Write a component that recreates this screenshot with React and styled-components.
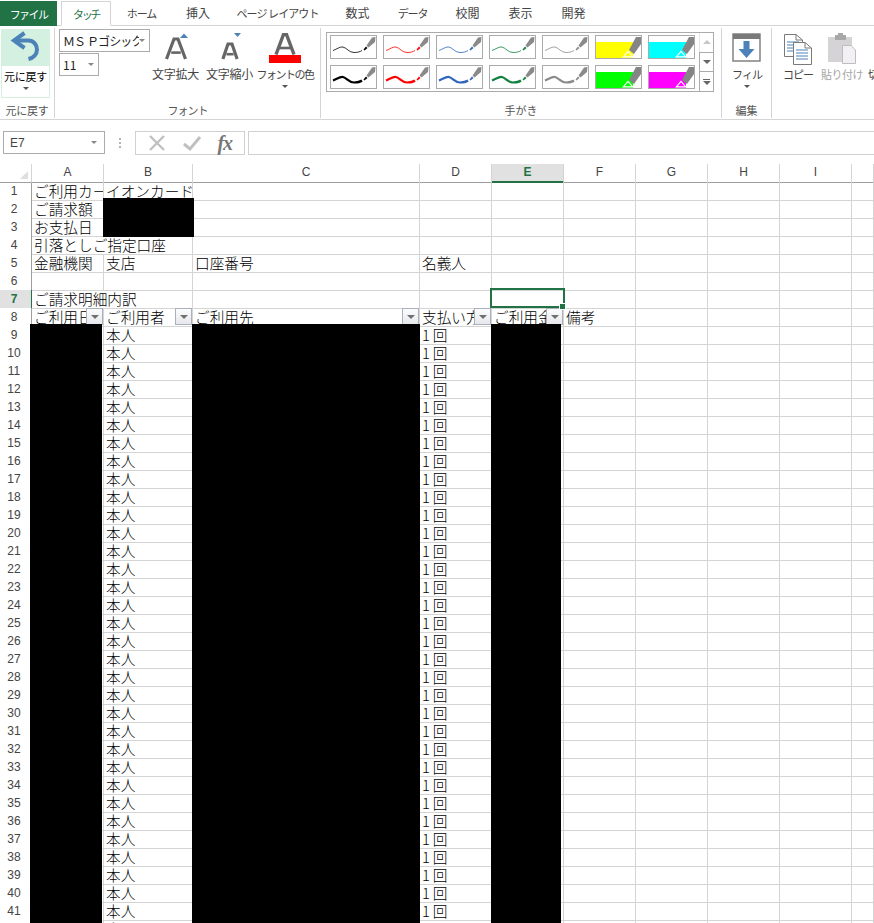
import { createGlobalStyle } from "styled-components";
import styled from "styled-components";

const GlobalStyle = createGlobalStyle`
  html, body {
    margin: 0;
    padding: 0;
    background: #fff;
    height: 923px;
    overflow: hidden;
  }
`;

const uiFont = `"Noto Sans CJK JP", "Noto Sans", sans-serif`;
const grid = "#d4d4d4";
const green = "#217346";

const Page = styled.div`
  width: 874px;
  height: 923px;
  overflow: hidden;
  font-family: ${uiFont};
  display: flex;
  flex-direction: column;
`;

/* tabs */
const TabBar = styled.div`
  height: 26px;
  display: flex;
  box-sizing: border-box;
  border-bottom: 1px solid ${grid};
`;
const FileTab = styled.div`
  width: 57px;
  height: 25px;
  margin-top: 1px;
  background: ${green};
  color: #fff;
  font-size: 11px;
  letter-spacing: -1.6px;
  display: flex;
  align-items: center;
  justify-content: center;
`;
const Tab = styled.div`
  width: ${(p) => p.$w}px;
  height: 25px;
  box-sizing: border-box;
  flex: none;
  display: flex;
  align-items: center;
  justify-content: center;
  color: #444;
  font-size: ${(p) => (p.$ls ? 11 : 12)}px;
  letter-spacing: ${(p) => p.$ls || 0}px;
  white-space: pre;
  ${(p) =>
    p.$active &&
    `
    margin-left: 4px;
    margin-top: 1px;
    background: #fff;
    color: ${green};
    border: 1px solid ${grid};
    border-bottom: 1px solid #fff;
    margin-bottom: -1px;
  `}
`;

/* ribbon */
const Ribbon = styled.div`
  height: 94px;
  box-sizing: border-box;
  border-bottom: 1px solid ${grid};
  display: flex;
  overflow: hidden;
  flex: none;
`;
const Group = styled.div`
  width: ${(p) => p.$w}px;
  flex: none;
  box-sizing: border-box;
  height: 90px;
  margin-top: 2px;
  border-right: ${(p) => (p.$last ? "none" : `1px solid ${grid}`)};
  display: flex;
  flex-direction: column;
`;
const GroupBody = styled.div`
  height: 74px;
  flex: none;
  display: flex;
  align-items: flex-start;
  gap: ${(p) => p.$gap || 0}px;
  padding-left: ${(p) => p.$pad || 0}px;
`;
const GroupLabel = styled.div`
  flex: 1;
  text-align: center;
  color: #555;
  font-size: 11px;
  line-height: 16px;
  letter-spacing: ${(p) => p.$ls || 0}px;
  white-space: nowrap;
`;
const UndoButton = styled.div`
  width: 49px;
  height: 69px;
  margin: 1px 0 0 1px;
  box-sizing: border-box;
  border: 1px solid #d3f0e0;
  display: flex;
  flex-direction: column;
  align-items: center;
`;
const UndoTop = styled.div`
  width: 100%;
  height: 36px;
  background: #d3f0e0;
  flex: none;
  svg {
    display: block;
  }
`;
const BigButton = styled.div`
  width: ${(p) => p.$w}px;
  flex: none;
  display: flex;
  flex-direction: column;
  align-items: ${(p) => (p.$start ? "flex-start" : "center")};
  color: ${(p) => (p.$off ? "#a5a5a5" : "#444")};
`;
const IconSlot = styled.div`
  height: 36px;
  width: 100%;
  display: flex;
  justify-content: center;
  align-items: flex-start;
  flex: none;
  padding-top: 5px;
  box-sizing: border-box;
  svg {
    display: block;
  }
`;
const BtnText = styled.div`
  font-size: ${(p) => p.$size || 11}px;
  line-height: 16px;
  margin-top: 2px;
  white-space: nowrap;
  letter-spacing: ${(p) => p.$ls || 0}px;
`;
const Caret = styled.div`
  width: 0;
  height: 0;
  margin-top: 3px;
  border-left: 3px solid transparent;
  border-right: 3px solid transparent;
  border-top: 3px solid #555;
`;
const FontCol = styled.div`
  width: 92px;
  box-sizing: border-box;
  flex: none;
  padding-left: 4px;
  margin-top: 1px;
  display: flex;
  flex-direction: column;
  align-items: flex-start;
  gap: 1px;
`;
const Combo = styled.div`
  width: ${(p) => p.$w}px;
  height: ${(p) => p.$h}px;
  box-sizing: border-box;
  border: 1px solid #ababab;
  display: flex;
  align-items: center;
  justify-content: space-between;
  padding: 0 4px 0 3px;
  font-size: 12px;
  color: #222;
  white-space: nowrap;
  overflow: hidden;
  flex: none;
`;
const ComboArrow = styled.span`
  width: 0;
  height: 0;
  flex: none;
  border-left: 3px solid transparent;
  border-right: 3px solid transparent;
  border-top: 3px solid #888;
`;
const ComboText = styled.span`
  letter-spacing: -0.9px;
  overflow: hidden;
`;

/* pen gallery */
const Gallery = styled.div`
  margin: 4px 0 0 5px;
  width: 388px;
  height: 60px;
  box-sizing: border-box;
  border: 1px solid #ababab;
  display: flex;
`;
const Swatches = styled.div`
  display: grid;
  width: 372px;
  flex: none;
  padding: 2px 0 0 3px;
  box-sizing: border-box;
  grid-template-columns: repeat(7, 47px);
  grid-template-rows: 24px 24px;
  column-gap: 6px;
  row-gap: 6px;
`;
const Swatch = styled.div`
  box-sizing: border-box;
  border: 1px solid #ababab;
  background: #fff;
  width: 47px;
  height: 24px;
  svg {
    display: block;
  }
`;
const ScrollCol = styled.div`
  flex: 1;
  display: flex;
  flex-direction: column;
`;
const ScrollBtn = styled.div`
  flex: 1;
  display: flex;
  flex-direction: column;
  align-items: center;
  justify-content: center;
  gap: 1px;
  border-left: 1px solid ${(p) => (p.$off ? "#e6e6e6" : "#ababab")};
  border-top: ${(p) => (p.$first ? "none" : "1px solid #ababab")};
`;
const ScrollBar = styled.span`
  width: 7px;
  height: 1px;
  background: #666;
`;
const ScrollArrow = styled.span`
  width: 0;
  height: 0;
  border-left: 4px solid transparent;
  border-right: 4px solid transparent;
  ${(p) =>
    p.$up
      ? `border-bottom: 4px solid #c6c6c6;`
      : `border-top: 4px solid #666;`}
`;

/* formula bar */
const FormulaBar = styled.div`
  height: 44px;
  flex: none;
  display: flex;
  align-items: flex-start;
  padding: 11px 0 0 3px;
  box-sizing: border-box;
`;
const NameBox = styled.div`
  width: 102px;
  height: 23px;
  box-sizing: border-box;
  border: 1px solid #ababab;
  display: flex;
  align-items: center;
  justify-content: space-between;
  padding: 0 7px 0 6px;
  font: 12px "Liberation Sans", sans-serif;
  color: #444;
`;
const Dots = styled.div`
  width: 30px;
  height: 23px;
  display: flex;
  flex-direction: column;
  align-items: center;
  justify-content: center;
  gap: 2px;
  span {
    width: 2px;
    height: 2px;
    background: #b4b4b4;
  }
`;
const FxBox = styled.div`
  width: 110px;
  height: 24px;
  box-sizing: border-box;
  border: 1px solid #d0d0d0;
  display: flex;
  align-items: center;
  justify-content: space-around;
  padding: 0 4px;
`;
const FxText = styled.i`
  font: italic bold 20px "Liberation Serif", serif;
  color: #777;
  line-height: 20px;
  letter-spacing: -1px;
`;
const FormulaInput = styled.div`
  flex: 1;
  height: 24px;
  margin-left: 3px;
  box-sizing: border-box;
  border: 1px solid #d0d0d0;
  border-right: none;
`;

/* sheet */
const columns = "32px 72px 89px 227px 72px 72px 72px 72px 72px 72px 1fr";

const Sheet = styled.div`
  flex: 1;
  position: relative;
  overflow: hidden;
`;
const HeadRow = styled.div`
  display: grid;
  grid-template-columns: ${columns};
  height: 18px;
`;
const Corner = styled.div`
  box-sizing: border-box;
  border-right: 1px solid ${grid};
  border-bottom: 1px solid #9f9f9f;
  position: relative;
  &::after {
    content: "";
    position: absolute;
    right: 3px;
    bottom: 3px;
    width: 0;
    height: 0;
    border-left: 8px solid transparent;
    border-bottom: 8px solid #dfdfdf;
  }
`;
const ColHead = styled.div`
  box-sizing: border-box;
  border-right: 1px solid ${grid};
  border-bottom: ${(p) => (p.$on ? `2px solid ${green}` : "1px solid #9f9f9f")};
  background: ${(p) => (p.$on ? "#e1e1e1" : "#fff")};
  color: ${(p) => (p.$on ? green : "#444")};
  font: ${(p) => (p.$on ? "bold " : "")}12px/17px "Liberation Sans", sans-serif;
  text-align: center;
`;
const Row = styled.div`
  display: grid;
  grid-template-columns: ${columns};
  height: 18px;
`;
const RowHead = styled.div`
  box-sizing: border-box;
  border-right: 1px solid ${(p) => (p.$on ? green : "#9f9f9f")};
  border-bottom: 1px solid ${grid};
  background: ${(p) => (p.$on ? "#e1e1e1" : "#fff")};
  color: ${(p) => (p.$on ? green : "#444")};
  font: ${(p) => (p.$on ? "bold " : "")}12px/18px "Liberation Sans", sans-serif;
  text-align: center;
  padding-right: 3px;
`;
const Cell = styled.div`
  box-sizing: border-box;
  min-width: 0;
  grid-column: span ${(p) => p.$span || 1};
  border-right: 1px solid ${grid};
  border-bottom: 1px solid ${grid};
  position: relative;
  overflow: hidden;
  padding-left: 2px;
  font-size: 14.67px;
  font-weight: 300;
  line-height: 18px;
  letter-spacing: ${(p) => p.$ls || 0}px;
  color: #000;
  white-space: nowrap;
`;
const FilterBtn = styled.div`
  position: absolute;
  right: 0;
  top: 0;
  width: 17px;
  height: 17px;
  box-sizing: border-box;
  border: 1px solid #aab1bd;
  background: linear-gradient(#fbfcfd, #e6e8ec);
  display: flex;
  align-items: center;
  justify-content: center;
  &::after {
    content: "";
    width: 0;
    height: 0;
    border-left: 4px solid transparent;
    border-right: 4px solid transparent;
    border-top: 4px solid #707070;
  }
`;
const Redaction = styled.div`
  position: absolute;
  left: ${(p) => p.$x}px;
  top: ${(p) => p.$y}px;
  width: ${(p) => p.$w}px;
  height: ${(p) => p.$h}px;
  background: #000;
`;
const Selection = styled.div`
  position: absolute;
  left: 490px;
  top: 124px;
  width: 75px;
  height: 20px;
  box-sizing: border-box;
  border: 2px solid ${green};
  &::after {
    content: "";
    position: absolute;
    right: -3px;
    bottom: -4px;
    width: 5px;
    height: 5px;
    background: ${green};
    border: 1px solid #fff;
  }
`;

function UndoIcon() {
  return (
    <svg width="47" height="36" viewBox="0 0 47 36">
      <path
        d="M12 10.5 H26 C32 10.5 35 15 35 19.5 C35 24.5 31 28 26.5 29"
        fill="none"
        stroke="#4d82b8"
        strokeWidth="4"
      />
      <path d="M22.5 3 L12 10.5 L22.5 18" fill="none" stroke="#4d82b8" strokeWidth="4" />
    </svg>
  );
}

function LetterIcon({ size, dir }) {
  // grow / shrink font icon, the A is a plain shape drawing of the ribbon glyph
  const h = size;
  const w = size * 0.95;
  const x = 16 - w / 2;
  const base = 26;
  return (
    <svg width="32" height="30" viewBox="0 0 32 30">
      <path
        d={`M${x} ${base} L${16 - 2} ${base - h} H${16 + 2} L${x + w} ${base}`}
        fill="none"
        stroke="#666"
        strokeWidth="3.2"
      />
      <path d={`M${x + w * 0.25} ${base - h * 0.32} H${x + w * 0.75}`} stroke="#666" strokeWidth="2.6" />
      {dir === "up" ? (
        <path d="M20 5 L24 0.5 L28 5 Z" fill="#4d82b8" />
      ) : (
        <path d="M20 0 H27 L23.5 4 Z" fill="#4d82b8" />
      )}
    </svg>
  );
}

function FontColorIcon() {
  return (
    <svg width="34" height="30" viewBox="0 0 34 30">
      <path d="M8 21.5 L15.5 1.5 H18.5 L26 21.5" fill="none" stroke="#666" strokeWidth="3.4" />
      <path d="M11 15 H23" stroke="#666" strokeWidth="2.6" />
      <rect x="1" y="22" width="32" height="8" fill="#ff0000" />
    </svg>
  );
}

function PenSwatch({ color, thick }) {
  return (
    <svg width="45" height="22" viewBox="0 0 45 22">
      <path
        d="M2 14.5 C6 13 9 10.5 12 11 C16 12 18 16.5 23 16.5 C26 16.5 29 16 31 14.5"
        fill="none"
        stroke={color}
        strokeOpacity={thick ? 1 : 0.8}
        strokeWidth={thick ? 2.2 : 1}
      />
      <path d="M32.5 13.5 L35 10.5 L36.5 12 L33.5 14.5 Z" fill={color} />
      <path d="M35.5 9.5 L41 1.5 L44.5 1 L44 6 L37.5 11.5 Z" fill="#8a8a8a" />
    </svg>
  );
}

function MarkerSwatch({ color }) {
  return (
    <svg width="45" height="22" viewBox="0 0 45 22">
      <rect x="0" y="6" width="37" height="16" fill={color} />
      <path d="M26 21.5 L32 14.5 L38 21.5 Z" fill="#fff" />
      <path d="M28.5 20.3 L32 16.3 L35.5 20.3 Z" fill={color} />
      <path d="M33 14 L40 1 L45 1 L45 8 L38 18 Z" fill="#858585" />
    </svg>
  );
}

function FillIcon() {
  return (
    <svg width="30" height="30" viewBox="0 0 30 30">
      <rect x="1" y="1" width="27" height="27" fill="#fff" stroke="#7a7a7a" strokeWidth="1.4" />
      <rect x="1" y="1" width="27" height="5" fill="#7a7a7a" />
      <path d="M11.5 8 H17.5 V16 H22.5 L14.5 25 L6.5 16 H11.5 Z" fill="#4d82b8" />
    </svg>
  );
}

function Sheetlet({ x, y }) {
  return (
    <g transform={`translate(${x} ${y})`}>
      <path d="M0.5 0.5 H12 L18.5 6 V22.5 H0.5 Z" fill="#fff" stroke="#7a7a7a" />
      <path d="M12 0.5 V6 H18.5" fill="none" stroke="#7a7a7a" />
      <path d="M3 8 H15 M3 11 H15 M3 14 H15 M3 17 H15" stroke="#4d82b8" strokeWidth="1.2" />
    </g>
  );
}

function CopyIcon() {
  return (
    <svg width="30" height="32" viewBox="0 0 30 32">
      <Sheetlet x={1} y={1} />
      <Sheetlet x={10} y={9} />
    </svg>
  );
}

function PasteIcon() {
  return (
    <svg width="30" height="32" viewBox="0 0 30 32">
      <rect x="1" y="4" width="24" height="25" fill="#d6d3d6" />
      <path d="M8 4 V2 H11 V0 H16 V2 H19 V4 V7 H8 Z" fill="#a8a8a8" />
      <path d="M15.5 12.5 H24 L28.5 17 V30.5 H15.5 Z" fill="#f3f0f5" stroke="#bdbdbd" />
    </svg>
  );
}

const tabs = [
  { name: "ホーム", w: 61, ls: -1.1 },
  { name: "挿入", w: 52 },
  { name: "ページ レイアウト", w: 107, ls: -0.9 },
  { name: "数式", w: 53 },
  { name: "データ", w: 57, ls: -1.1 },
  { name: "校閲", w: 53 },
  { name: "表示", w: 53 },
  { name: "開発", w: 53 },
];

const inks = ["#000000", "#ff0000", "#2f64c0", "#0f8040", "#8a8a8a"];
const colHeads = ["A", "B", "C", "D", "E", "F", "G", "H", "I", "J"];

// top rows of the sheet: [text, span] per cell
const topRows = {
  1: ["ご利用カー", "イオンカード"],
  2: ["ご請求額"],
  3: ["お支払日"],
  4: [["引落としご指定口座", 2]],
  5: ["金融機関", "支店", "口座番号", "名義人"],
  6: [],
  7: [["ご請求明細内訳", 2]],
};

function cellsFor(n) {
  let list = [];
  if (n === 8) {
    list = ["ご利用日", "ご利用者", "ご利用先", "支払い方法", "ご利用金額", "備考"].map((t, i) => [t, 1, i < 5]);
  } else if (n > 8) {
    list = [[""], ["本人"], [""], ["1回", 1, false, 3]];
  } else {
    list = topRows[n].map((c) => (Array.isArray(c) ? c : [c]));
  }
  const used = list.reduce((sum, c) => sum + (c[1] || 1), 0);
  for (let i = used; i < 10; i++) list.push([""]);
  return list;
}

const rows = Array.from({ length: 42 }, (_, i) => i + 1);

export default function App() {
  return (
    <Page>
      <GlobalStyle />
      <TabBar>
        <FileTab>ファイル</FileTab>
        <Tab $active $w={50} $ls={-2.3}>
          タッチ
        </Tab>
        {tabs.map((t) => (
          <Tab key={t.name} $w={t.w} $ls={t.ls}>
            {t.name}
          </Tab>
        ))}
      </TabBar>

      <Ribbon>
        <Group $w={55}>
          <GroupBody>
            <UndoButton>
              <UndoTop>
                <UndoIcon />
              </UndoTop>
              <BtnText $ls={-0.3}>元に戻す</BtnText>
              <Caret />
            </UndoButton>
          </GroupBody>
          <GroupLabel $ls={-0.3}>元に戻す</GroupLabel>
        </Group>

        <Group $w={266}>
          <GroupBody>
            <FontCol>
              <Combo $w={91} $h={23}>
                <ComboText>ＭＳ Ｐゴシック</ComboText>
                <ComboArrow />
              </Combo>
              <Combo $w={40} $h={23}>
                11
                <ComboArrow />
              </Combo>
            </FontCol>
            <BigButton $w={57}>
              <IconSlot>
                <LetterIcon size={20} dir="up" />
              </IconSlot>
              <BtnText $size={12} $ls={-0.2}>文字拡大</BtnText>
            </BigButton>
            <BigButton $w={51}>
              <IconSlot>
                <LetterIcon size={15} dir="down" />
              </IconSlot>
              <BtnText $size={12} $ls={-0.2}>文字縮小</BtnText>
            </BigButton>
            <BigButton $w={60}>
              <IconSlot>
                <FontColorIcon />
              </IconSlot>
              <BtnText $ls={-1.5}>フォントの色</BtnText>
              <Caret />
            </BigButton>
          </GroupBody>
          <GroupLabel $ls={-1}>フォント</GroupLabel>
        </Group>

        <Group $w={401}>
          <GroupBody>
            <Gallery>
              <Swatches>
                {inks.map((c) => (
                  <Swatch key={c}>
                    <PenSwatch color={c} />
                  </Swatch>
                ))}
                <Swatch>
                  <MarkerSwatch color="#ffff00" />
                </Swatch>
                <Swatch>
                  <MarkerSwatch color="#00ffff" />
                </Swatch>
                {inks.map((c) => (
                  <Swatch key={c}>
                    <PenSwatch color={c} thick />
                  </Swatch>
                ))}
                <Swatch>
                  <MarkerSwatch color="#00ff00" />
                </Swatch>
                <Swatch>
                  <MarkerSwatch color="#ff00ff" />
                </Swatch>
              </Swatches>
              <ScrollCol>
                <ScrollBtn $first $off>
                  <ScrollArrow $up />
                </ScrollBtn>
                <ScrollBtn>
                  <ScrollArrow />
                </ScrollBtn>
                <ScrollBtn>
                  <ScrollBar />
                  <ScrollArrow />
                </ScrollBtn>
              </ScrollCol>
            </Gallery>
          </GroupBody>
          <GroupLabel>手がき</GroupLabel>
        </Group>

        <Group $w={50}>
          <GroupBody>
            <BigButton $w={50}>
              <IconSlot>
                <FillIcon />
              </IconSlot>
              <BtnText $ls={-1}>フィル</BtnText>
              <Caret />
            </BigButton>
          </GroupBody>
          <GroupLabel>編集</GroupLabel>
        </Group>

        <Group $w={102} $last>
          <GroupBody $pad={8} $gap={3}>
            <BigButton $w={36}>
              <IconSlot>
                <CopyIcon />
              </IconSlot>
              <BtnText $ls={-1}>コピー</BtnText>
            </BigButton>
            <BigButton $w={46} $off>
              <IconSlot>
                <PasteIcon />
              </IconSlot>
              <BtnText $ls={-0.5}>貼り付け</BtnText>
            </BigButton>
            <BigButton $w={18} $start>
              <IconSlot />
              <BtnText>切り取り</BtnText>
            </BigButton>
          </GroupBody>
        </Group>
      </Ribbon>

      <FormulaBar>
        <NameBox>
          E7
          <ComboArrow />
        </NameBox>
        <Dots>
          <span />
          <span />
          <span />
        </Dots>
        <FxBox>
          <svg width="18" height="18" viewBox="0 0 18 18">
            <path d="M2 2 L16 16 M16 2 L2 16" stroke="#c0c0c0" strokeWidth="2.4" />
          </svg>
          <svg width="20" height="18" viewBox="0 0 20 18">
            <path d="M2 10 L8 15 L18 3" fill="none" stroke="#c0c0c0" strokeWidth="3" />
          </svg>
          <FxText>fx</FxText>
        </FxBox>
        <FormulaInput />
      </FormulaBar>

      <Sheet>
        <HeadRow>
          <Corner />
          {colHeads.map((c) => (
            <ColHead key={c} $on={c === "E"}>
              {c === "J" ? "" : c}
            </ColHead>
          ))}
        </HeadRow>
        {rows.map((n) => (
          <Row key={n}>
            <RowHead $on={n === 7}>{n}</RowHead>
            {cellsFor(n).map(([text, span, filter, ls], i) => (
              <Cell key={i} $span={span} $ls={ls}>
                {text}
                {filter && <FilterBtn />}
              </Cell>
            ))}
          </Row>
        ))}
        <Redaction $x={103} $y={34} $w={91} $h={39} />
        <Redaction $x={30} $y={160} $w={72} $h={600} />
        <Redaction $x={192} $y={160} $w={228} $h={600} />
        <Redaction $x={491} $y={160} $w={70} $h={600} />
        <Selection />
      </Sheet>
    </Page>
  );
}
